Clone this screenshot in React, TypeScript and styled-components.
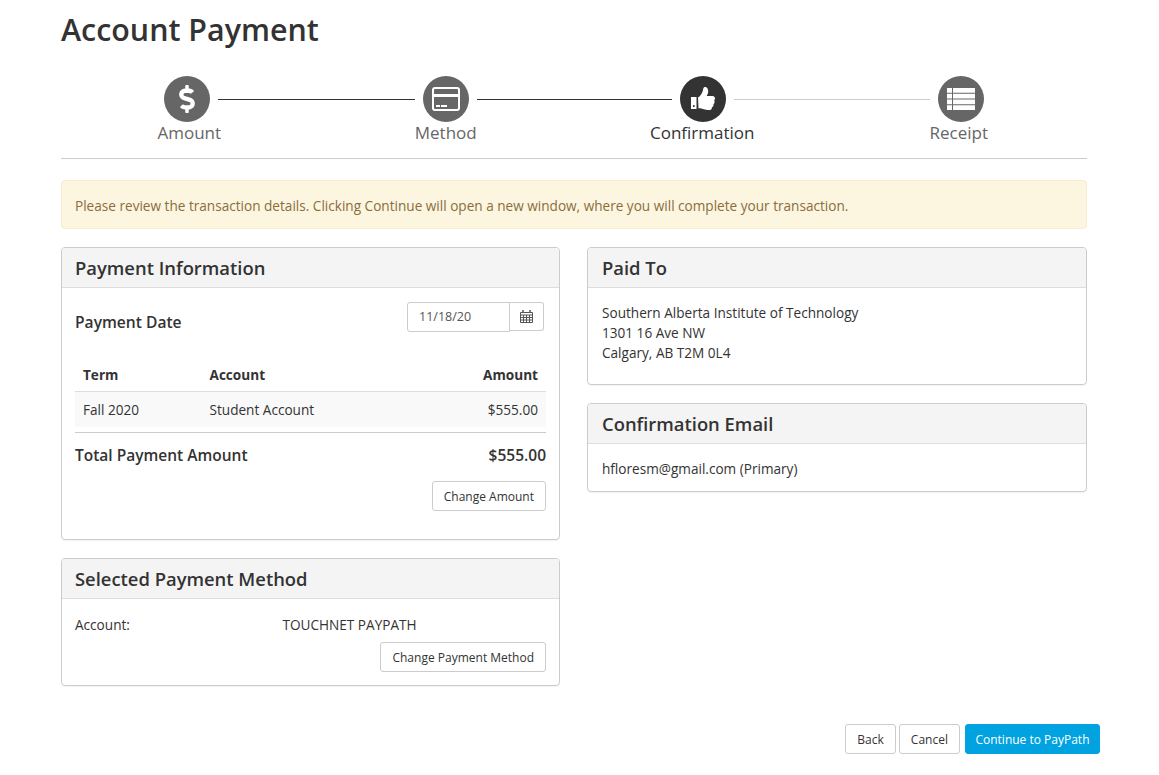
import React from "react";
import styled, { createGlobalStyle } from "styled-components";
import { FaDollarSign } from "react-icons/fa";

const Global = createGlobalStyle`
  html, body { margin: 0; padding: 0; background: #fff; }
  body { font-family: "Open Sans", "Noto Sans", sans-serif; color: #333; }
`;
const Page = styled.div`
  width: 1159px; height: 775px; overflow: hidden; box-sizing: border-box;
  padding: 0 72px 0 61px;
`;
const Title = styled.h1`
  margin: 0; padding-top: 10px; height: 76px; box-sizing: border-box;
  font-size: 30.4px; line-height: 40px; font-weight: 600; color: #333;
`;
const StepIcons = styled.div`
  display: flex; align-items: center; gap: 8px; padding: 0 103px;
`;
const Circle = styled.div<{ $active?: boolean }>`
  width: 46px; height: 46px; border-radius: 50%; flex: none;
  display: flex; align-items: center; justify-content: center;
  background: ${p => (p.$active ? "#333" : "#666")}; color: #fff;
`;
const Line = styled.div<{ $done?: boolean; $width: number }>`
  flex: none; width: ${p => p.$width}px; height: 1px; background: ${p => (p.$done ? "#333" : "#ccc")};
`;
const StepLabels = styled.div`
  display: grid; grid-template-columns: repeat(4, 1fr); margin-top: -1px;
  padding-bottom: 13px; border-bottom: 1px solid #ccc;
`;
const StepLabel = styled.div<{ $active?: boolean }>`
  text-align: center; font-size: 17px; line-height: 24px; color: ${p => (p.$active ? "#333" : "#666")};
`;
const Alert = styled.div`
  margin-top: 21px; height: 49px; box-sizing: border-box; padding: 2px 13px 0;
  background: #fcf6e1; border: 1px solid #faebcc; border-radius: 4px;
  color: #8a6d3b; font-size: 13.6px; display: flex; align-items: center;
`;
const Columns = styled.div`
  display: grid; grid-template-columns: 499px 500px; gap: 27px; margin-top: 18px; height: 477px;
`;
const Column = styled.div`
  display: flex; flex-direction: column; gap: 18px;
`;
const Panel = styled.section<{ $height: number }>`
  height: ${p => p.$height}px; box-sizing: border-box;
  border: 1px solid #ccc; border-radius: 4px; box-shadow: 0 1px 1px rgba(0,0,0,.05);
`;
const PanelHead = styled.h2<{ $inset?: boolean }>`
  margin: 0; height: 40px; box-sizing: border-box; padding: 0 ${p => (p.$inset ? 14 : 13)}px;
  display: flex; align-items: center; font-size: 18.4px; font-weight: 600; color: #333;
  background: #f4f4f4; border-bottom: 1px solid #ddd; border-radius: 3px 3px 0 0;
`;
const PanelBody = styled.div<{ $inset?: boolean }>`
  padding: ${p => (p.$inset ? "15px 14px" : "14px 13px")}; font-size: 13.6px; line-height: 20px; color: #333;
  display: flex; flex-direction: column;
`;
const DateRow = styled.div`
  display: flex; justify-content: space-between; align-items: center; height: 40px;
`;
const SubHead = styled.div`
  font-size: 15.6px; font-weight: 600; color: #333;
`;
const DateGroup = styled.div`
  display: flex; height: 30px; margin: -10px 2px 0 0;
`;
const DateValue = styled.div`
  width: 103px; box-sizing: border-box; border: 1px solid #ccc; border-radius: 3px 0 0 3px;
  padding: 0 11px; display: flex; align-items: center; font-size: 12.5px; color: #555;
`;
const DateAddon = styled.div`
  width: 34px; height: 29px; box-sizing: border-box; border: 1px solid #ccc; border-left: 0;
  border-radius: 0 3px 3px 0; display: flex; align-items: center; justify-content: center; color: #555;
`;
const Table = styled.div`
  margin-top: 17px; border-bottom: 1px solid #ccc; padding-bottom: 5px;
`;
const Row = styled.div<{ $head?: boolean }>`
  display: grid; grid-template-columns: 126.500px 1fr auto; padding: 0 8px; align-items: center;
  height: ${p => (p.$head ? 32 : 35)}px; font-size: 13.6px;
  font-weight: ${p => (p.$head ? 700 : 400)};
  background: ${p => (p.$head ? "transparent" : "#f9f9f9")};
  border-bottom: ${p => (p.$head ? "1px solid #ddd" : "0")};
`;
const TotalRow = styled.div`
  display: flex; justify-content: space-between; align-items: center; height: 44px; margin-bottom: 4px;
  font-size: 15.5px; font-weight: 600;
`;
const RightAlign = styled.div`
  display: flex; justify-content: flex-end;
`;
const Button = styled.button<{ $primary?: boolean }>`
  height: 30px; padding: 0 ${p => (p.$primary ? "9.500px" : "11px")}; box-sizing: border-box; font-family: inherit; font-size: 12px;
  border-radius: 3px; cursor: pointer; margin-left: ${p => (p.$primary ? 2 : 0)}px;
  background: ${p => (p.$primary ? "#00a3e0" : "#fff")};
  color: ${p => (p.$primary ? "#fff" : "#333")};
  border: 1px solid ${p => (p.$primary ? "#00a3e0" : "#ccc")};
`;
const AccountRow = styled.div`
  display: grid; grid-template-columns: 207.500px 1fr; margin-top: 2px; margin-bottom: 7px;
`;
const Footer = styled.div`
  display: flex; justify-content: flex-end; gap: 3px; margin-right: -13px;
`;

const CardIcon = () => (
  <svg width="28" height="24" viewBox="0 0 28 24" aria-hidden="true">
    <rect x="1" y="1" width="26" height="22" rx="2" fill="none" stroke="#fff" strokeWidth="2" />
    <rect x="2" y="7" width="24" height="3" fill="#fff" />
    <rect x="4" y="18" width="4" height="2" fill="#fff" />
    <rect x="9" y="18" width="6" height="2" fill="#fff" />
  </svg>
);
const ThumbIcon = () => (
  <svg width="26" height="26" viewBox="0 0 26 26" aria-hidden="true">
    <path fill="#fff" d="M1 11h5.5v12H1z" />
    <circle cx="3.8" cy="20" r="1" fill="#333" />
    <path fill="#fff" d="M8 11.5c2-1 4.2-4.5 4.8-6.8.4-1.6.5-3.7 2.2-3.7 2.500 0 3.200 2.500 3.200 4.500 0 1.800-.9 3.300-1.500 4.500h5.800c1.500 0 2.500 1.200 2.500 2.500 0 .8-.4 1.500-.8 2 .3.600.5 1.100.4 1.800-.1.800-.5 1.500-1.100 1.900.1.800 0 1.600-.5 2.200-.3.400-.7.700-1.100.9.100.8-.1 1.400-.5 1.900-.6.700-1.700.8-3 .8-3.300 0-5.200-1.500-9.900-1.700z" />
  </svg>
);
const ListIcon = () => (
  <svg width="28" height="22" viewBox="0 0 28 22" aria-hidden="true">
    <path fill="#fff" d="M0 0h5v4.750H0zM6 0h22v4.750H6zM0 5.750h5v4.750H0zM6 5.750h22v4.750H6zM0 11.500h5v4.750H0zM6 11.500h22v4.750H6zM0 17.250h5v4.750H0zM6 17.250h22v4.750H6z" />
  </svg>
);
const CalendarIcon = () => (
  <svg width="13" height="13" viewBox="0 0 13 13" aria-hidden="true">
    <path fill="none" stroke="#555" d="M.5 2.500h12v10H.5zM.5 5h12M3.500 5v7.500M6.500 5v7.500M9.500 5v7.500M.5 7.500h12M.5 10h12" />
    <path stroke="#555" strokeWidth="1.500" d="M3 0v3M10 0v3" />
  </svg>
);

export default function App() {
  return (
    <Page>
      <Global />
      <Title>Account Payment</Title>
      <StepIcons>
        <Circle><FaDollarSign size={28} /></Circle>
        <Line $done $width={197} />
        <Circle><CardIcon /></Circle>
        <Line $done $width={195} />
        <Circle $active><ThumbIcon /></Circle>
        <Line $width={196} />
        <Circle><ListIcon /></Circle>
      </StepIcons>
      <StepLabels>
        <StepLabel>Amount</StepLabel>
        <StepLabel>Method</StepLabel>
        <StepLabel $active>Confirmation</StepLabel>
        <StepLabel>Receipt</StepLabel>
      </StepLabels>
      <Alert>Please review the transaction details. Clicking Continue will open a new window, where you will complete your transaction.</Alert>
      <Columns>
        <Column>
          <Panel $height={293}>
            <PanelHead>Payment Information</PanelHead>
            <PanelBody>
              <DateRow>
                <SubHead>Payment Date</SubHead>
                <DateGroup>
                  <DateValue>11/18/20</DateValue>
                  <DateAddon><CalendarIcon /></DateAddon>
                </DateGroup>
              </DateRow>
              <Table>
                <Row $head><span>Term</span><span>Account</span><span>Amount</span></Row>
                <Row><span>Fall 2020</span><span>Student Account</span><span>$555.00</span></Row>
              </Table>
              <TotalRow><span>Total Payment Amount</span><span>$555.00</span></TotalRow>
              <RightAlign><Button>Change Amount</Button></RightAlign>
            </PanelBody>
          </Panel>
          <Panel $height={128}>
            <PanelHead>Selected Payment Method</PanelHead>
            <PanelBody>
              <AccountRow><span>Account:</span><span>TOUCHNET PAYPATH</span></AccountRow>
              <RightAlign><Button>Change Payment Method</Button></RightAlign>
            </PanelBody>
          </Panel>
        </Column>
        <Column>
          <Panel $height={138}>
            <PanelHead $inset>Paid To</PanelHead>
            <PanelBody $inset>
              <span>Southern Alberta Institute of Technology</span>
              <span>1301 16 Ave NW</span>
              <span>Calgary, AB T2M 0L4</span>
            </PanelBody>
          </Panel>
          <Panel $height={89}>
            <PanelHead $inset>Confirmation Email</PanelHead>
            <PanelBody $inset><span>hfloresm@gmail.com (Primary)</span></PanelBody>
          </Panel>
        </Column>
      </Columns>
      <Footer>
        <Button>Back</Button>
        <Button>Cancel</Button>
        <Button $primary>Continue to PayPath</Button>
      </Footer>
    </Page>
  );
}
